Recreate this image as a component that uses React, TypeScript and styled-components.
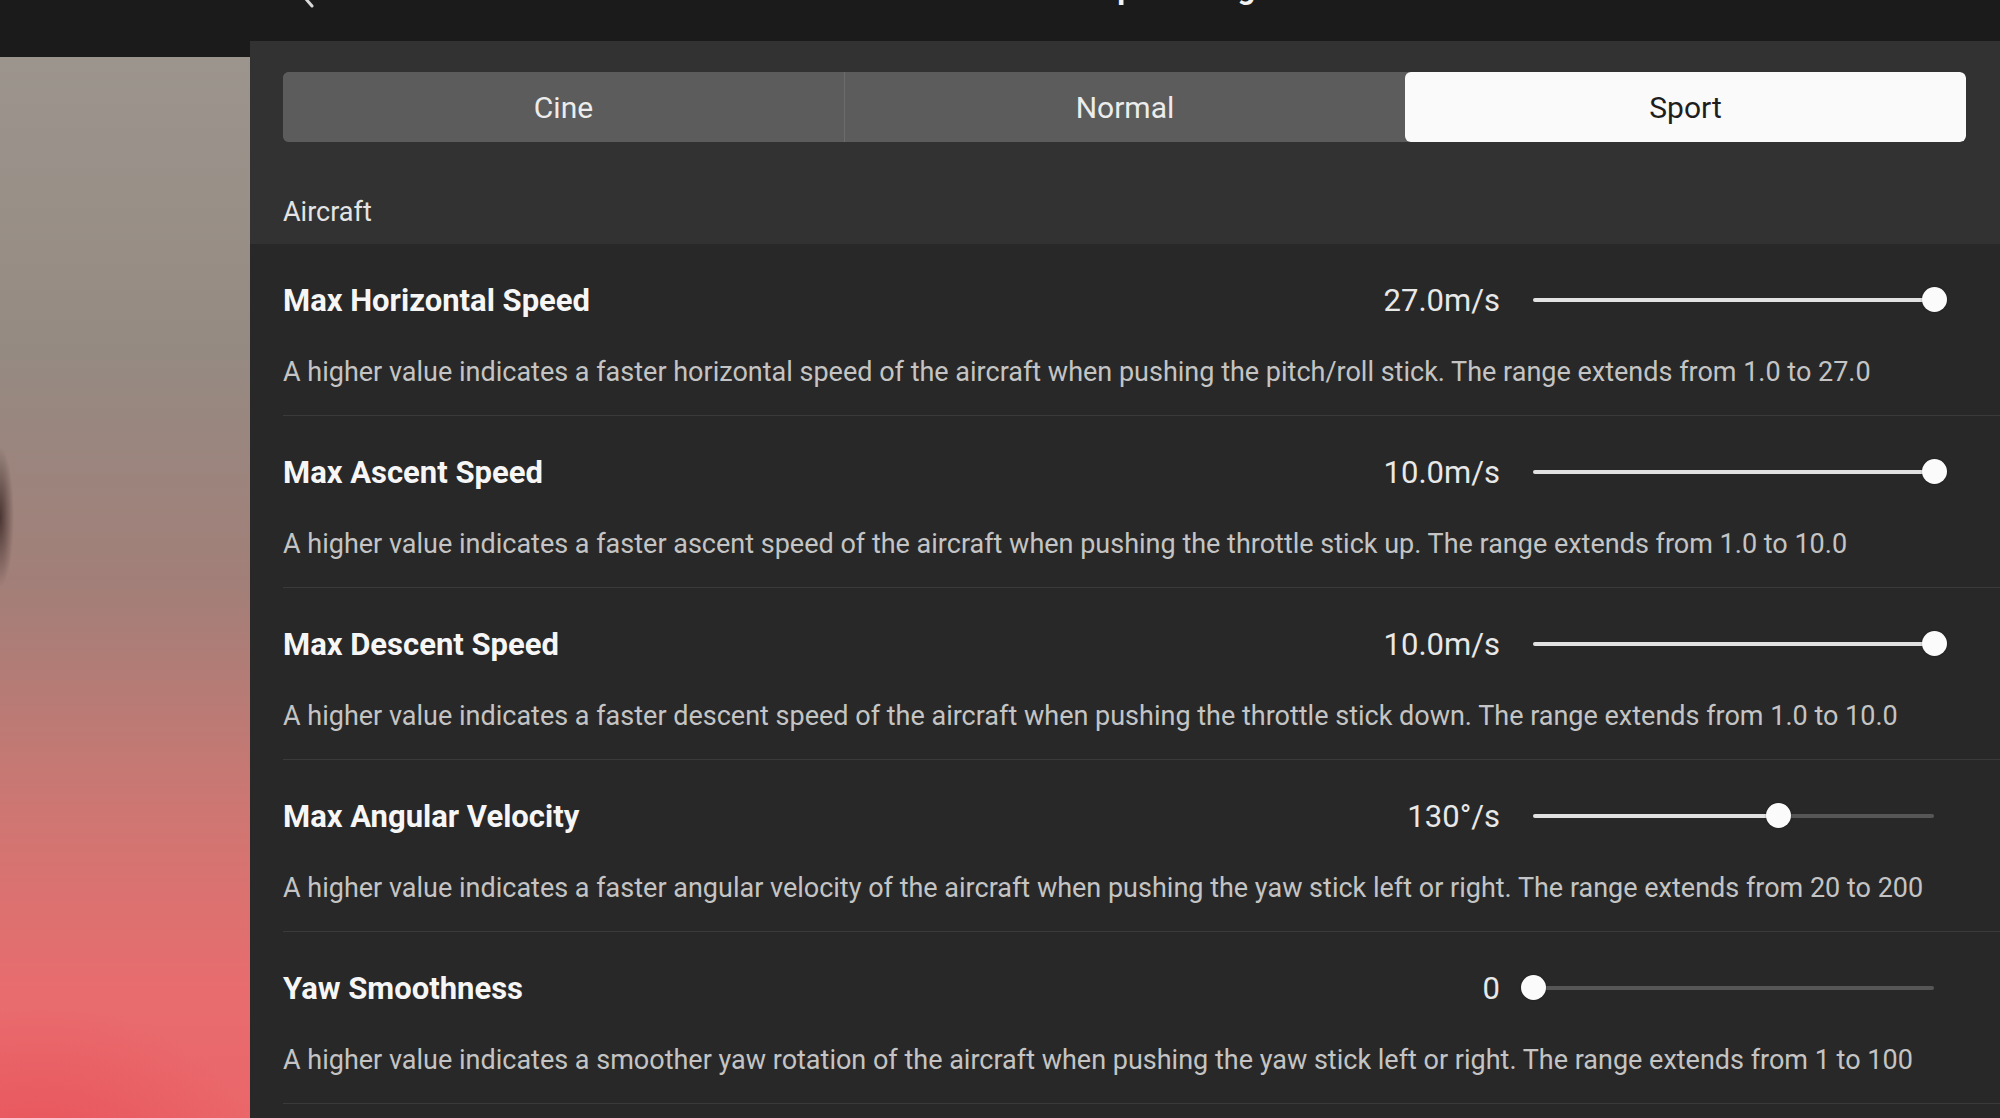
import React from 'react'
import styled, { createGlobalStyle } from 'styled-components'

const GlobalStyle = createGlobalStyle`
  html, body {
    margin: 0;
    padding: 0;
    background: #1b1b1b;
    font-family: Roboto, 'Noto Sans', 'Liberation Sans', sans-serif;
    overflow: hidden;
  }
`

const Page = styled.div`
  display: flex;
  width: 2000px;
  height: 1118px;
  background: #1b1b1b;
  overflow: hidden;
`

const SideColumn = styled.div`
  width: 250px;
  flex-shrink: 0;
  display: flex;
  flex-direction: column;
  padding-top: 57px;
`

// blurred camera view behind the settings sheet
const CameraView = styled.div`
  flex: 1;
  background:
    radial-gradient(ellipse 14px 70px at 0px 460px, rgba(60, 40, 38, 0.85), rgba(60, 40, 38, 0) 100%),
    radial-gradient(ellipse 220px 160px at 40px 1110px, rgba(232, 80, 88, 0.85), rgba(232, 80, 88, 0) 100%),
    linear-gradient(180deg, #9c958d 0%, #958a82 28%, #a27f78 50%, #d07672 72%, #e86c6e 88%, #ea6669 100%);
`

const Panel = styled.div`
  flex: 1;
  display: flex;
  flex-direction: column;
  background: #282828;
`

const Header = styled.header`
  height: 41px;
  flex-shrink: 0;
  display: flex;
  justify-content: center;
  align-items: flex-start;
  position: relative;
  overflow: hidden;
  background: #1b1b1b;
`

const BackButton = styled.div`
  position: absolute;
  left: 46px;
  top: -26px;
  color: #d8d8d8;
`

const HeaderTitle = styled.h1`
  margin: -29px 0 0 -10px;
  font-size: 31px;
  line-height: 36px;
  font-weight: 700;
  color: #f2f2f2;
`

const TopSection = styled.div`
  background: #323232;
  padding: 31px 34px 0 33px;
`

const Tabs = styled.div`
  display: grid;
  grid-template-columns: repeat(3, 1fr);
  height: 70px;
  border-radius: 6px;
  overflow: hidden;
  background: #5c5c5c;
`

const Tab = styled.div<{ $active?: boolean; $divider?: boolean }>`
  display: flex;
  align-items: center;
  justify-content: center;
  font-size: 30px;
  color: ${p => (p.$active ? '#1e1e1e' : '#ececec')};
  background: ${p => (p.$active ? '#fafafa' : '#5c5c5c')};
  border-left: ${p => (p.$divider ? '1px solid #6c6c6c' : 'none')};
  border-radius: ${p => (p.$active ? '6px' : '0')};
`

const SectionLabel = styled.div`
  padding: 54px 0 16px;
  font-size: 27px;
  line-height: 32px;
  color: #e4e4e4;
`

const List = styled.div`
  display: flex;
  flex-direction: column;
`

const Row = styled.div`
  margin-left: 33px;
  padding: 38px 66px 27px 0;
  border-bottom: 1px solid #3a3a3a;
`

const TopLine = styled.div`
  display: flex;
  align-items: center;
  height: 36px;
`

const Title = styled.div`
  flex: 1;
  font-size: 31px;
  font-weight: 700;
  color: #f6f6f6;
`

const Value = styled.div`
  margin-right: 33px;
  font-size: 31px;
  color: #e8e8e8;
`

const Slider = styled.div`
  position: relative;
  width: 401px;
  height: 26px;
  display: flex;
  align-items: center;
`

const Track = styled.div`
  width: 100%;
  height: 4px;
  border-radius: 2px;
`

const Thumb = styled.div`
  position: absolute;
  top: 0;
  width: 25px;
  height: 25px;
  margin-left: -12px;
  border-radius: 50%;
  background: #fbfbfb;
  box-shadow: 0 0 2px rgba(0, 0, 0, 0.4);
`

const Description = styled.div`
  margin-top: 38px;
  font-size: 27px;
  line-height: 32px;
  color: #c4c4c4;
  white-space: nowrap;
`

interface Setting {
  title: string
  value: string
  pct: number
  text: string
}

const settings: Setting[] = [
  {
    title: 'Max Horizontal Speed',
    value: '27.0m/s',
    pct: 100,
    text: 'A higher value indicates a faster horizontal speed of the aircraft when pushing the pitch/roll stick. The range extends from 1.0 to 27.0',
  },
  {
    title: 'Max Ascent Speed',
    value: '10.0m/s',
    pct: 100,
    text: 'A higher value indicates a faster ascent speed of the aircraft when pushing the throttle stick up. The range extends from 1.0 to 10.0',
  },
  {
    title: 'Max Descent Speed',
    value: '10.0m/s',
    pct: 100,
    text: 'A higher value indicates a faster descent speed of the aircraft when pushing the throttle stick down. The range extends from 1.0 to 10.0',
  },
  {
    title: 'Max Angular Velocity',
    value: '130°/s',
    pct: ((130 - 20) / 180) * 100,
    text: 'A higher value indicates a faster angular velocity of the aircraft when pushing the yaw stick left or right. The range extends from 20 to 200',
  },
  {
    title: 'Yaw Smoothness',
    value: '0',
    pct: 0,
    text: 'A higher value indicates a smoother yaw rotation of the aircraft when pushing the yaw stick left or right. The range extends from 1 to 100',
  },
]

const RangeSlider: React.FC<{ pct: number }> = ({ pct }) => (
  <Slider>
    <Track
      style={{
        background: `linear-gradient(90deg, #e2e2e2 ${pct}%, #565656 ${pct}%)`,
      }}
    />
    <Thumb style={{ left: `${pct}%` }} />
  </Slider>
)

const SettingRow: React.FC<Setting> = ({ title, value, pct, text }) => (
  <Row>
    <TopLine>
      <Title>{title}</Title>
      <Value>{value}</Value>
      <RangeSlider pct={pct} />
    </TopLine>
    <Description>{text}</Description>
  </Row>
)

const App: React.FC = () => (
  <>
    <GlobalStyle />
    <Page>
      <SideColumn>
        <CameraView />
      </SideColumn>
      <Panel>
        <Header>
          <BackButton>
            <svg width="20" height="34" viewBox="0 0 20 34" fill="none">
              <path d="M16 2 L3 17 L16 32" stroke="currentColor" strokeWidth="3" strokeLinecap="round" />
            </svg>
          </BackButton>
          <HeaderTitle>Gain &amp; Expo Tuning</HeaderTitle>
        </Header>
        <TopSection>
          <Tabs>
            <Tab>Cine</Tab>
            <Tab $divider>Normal</Tab>
            <Tab $active>Sport</Tab>
          </Tabs>
          <SectionLabel>Aircraft</SectionLabel>
        </TopSection>
        <List>
          {settings.map(s => (
            <SettingRow key={s.title} {...s} />
          ))}
        </List>
      </Panel>
    </Page>
  </>
)

export default App
